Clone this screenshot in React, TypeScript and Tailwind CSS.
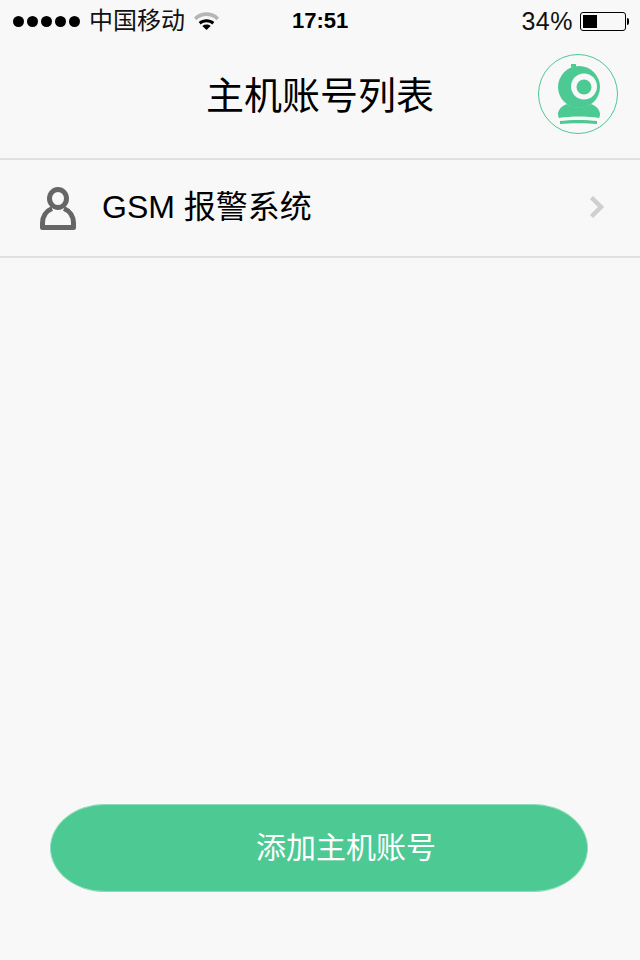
export default function App() {
  const font = { fontFamily: '"Liberation Sans", "Noto Sans CJK SC", sans-serif' };
  return (
    <div style={font} className="flex h-[960px] w-[640px] flex-col bg-[#f8f8f8] text-black">
      <div className="relative flex h-10 items-center pl-[13px] pr-[11px] pt-[2px]">
        <div className="flex gap-[3px]">
          {[0, 1, 2, 3, 4].map((i) => (
            <span key={i} className="h-[11px] w-[11px] rounded-full bg-black" />
          ))}
        </div>
        <span className="ml-[9px] text-[24px] leading-none text-[#111]">中国移动</span>
        <svg className="ml-[9px] mb-[2px]" width="25" height="19" viewBox="0 0 24 18">
          <path d="M0 6C7 -0.5 17 -0.5 24 6L21.8 8.8C15.8 3.4 8.2 3.4 2.2 8.8Z" fill="#b5b5b5" />
          <path d="M4.5 10.5C9 6.8 15 6.8 19.5 10.5L17.6 12.8C14.2 10 9.8 10 6.4 12.8Z" fill="#000" />
          <path d="M8 14.2C10.4 12.4 13.6 12.4 16 14.2L12 18Z" fill="#000" />
        </svg>
        <span className="absolute left-[292px] text-[22px] font-bold leading-none">17:51</span>
        <span className="ml-auto text-[25px] leading-none tracking-[0.5px] text-[#111]">34%</span>
        <div className="ml-[7px] flex items-center">
          <div className="h-[19px] w-[46px] rounded-[3px] border border-black p-[2px]">
            <div className="h-full w-[14px] bg-black" />
          </div>
          <span className="ml-[1px] h-[7px] w-[2px] rounded-r-full bg-black" />
        </div>
      </div>

      <div className="relative flex h-[120px] items-center justify-center border-b-2 border-[#e0e0e0] pb-[6px]">
        <span className="text-[38px] leading-none">主机账号列表</span>
        <div className="absolute left-[538px] top-[14px] flex h-[80px] w-[80px] items-center justify-center rounded-full border border-[#4dc993]">
          <svg className="shrink-0" width="80" height="80" viewBox="0 0 80 80" fill="#4dc993">
            <circle cx="41" cy="33" r="21" />
            <rect x="33" y="10" width="5" height="3" />
            <circle cx="46" cy="32.5" r="13" fill="#f8f8f8" />
            <circle cx="46" cy="33" r="7.5" />
            <path d="M20 60C20 56 24 51.5 29 50C36 55 46 55 53 50C58 51.5 62 56 62 60C62 62 61.5 63 61 64C50 62 32 62 21 64C20.5 63 20 62 20 60Z" />
            <path d="M22 67C32 65.5 49 65.5 59 67V70C49 69 32 69 22 70Z" />
          </svg>
        </div>
      </div>

      <div className="flex h-[98px] items-center border-b-2 border-[#e0e0e0] pb-[2px] pl-[38px] pr-[35px]">
        <svg className="mt-[1px] blur-[0.5px]" width="40" height="46" viewBox="0 0 40 46" fill="none" stroke="#666" strokeWidth="5" strokeLinejoin="round">
          <ellipse cx="20" cy="13.5" rx="8.5" ry="9" />
          <path d="M14 23.5C8 26 4.5 32 4.5 38V42.5H35.5V38C35.5 32 32 26 26 23.5" />
        </svg>
        <span className="ml-[24px] text-[32px] leading-none">GSM 报警系统</span>
        <svg className="ml-auto blur-[0.5px]" width="16" height="24" viewBox="0 0 16 24" fill="none" stroke="#cfcfcf" strokeWidth="4.5">
          <path d="M2.5 2.5L12 12L2.5 21.5" />
        </svg>
      </div>

      <div className="mb-[68px] ml-[50px] mt-auto flex h-[88px] w-[538px] items-center justify-center rounded-[55px/44px] border border-[#8fdcb9] bg-[#4dc993] pl-[54px]">
        <span className="text-[30px] leading-none text-white">添加主机账号</span>
      </div>
    </div>
  );
}
